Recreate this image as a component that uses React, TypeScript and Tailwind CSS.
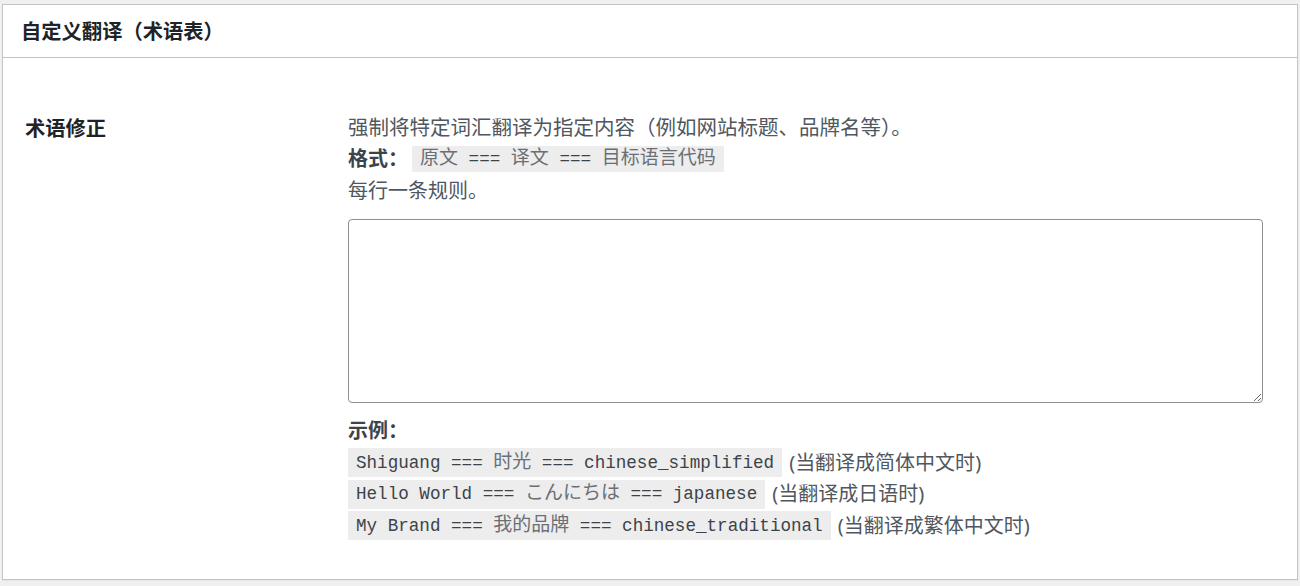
/**
 * GlossarySettings — "custom translation (glossary)" settings box, laid out
 * like a WordPress admin postbox with a single form-table row.
 */

const SANS = { fontFamily: '"Noto Sans", "Noto Sans CJK SC", sans-serif' }
const MONO = { fontFamily: '"Liberation Mono", "Noto Sans CJK SC", monospace' }

interface Example {
  source: string
  target: string
  lang: string
  note: string
}

const EXAMPLES: Example[] = [
  { source: 'Shiguang', target: '时光', lang: 'chinese_simplified', note: '当翻译成简体中文时' },
  { source: 'Hello World', target: 'こんにちは', lang: 'japanese', note: '当翻译成日语时' },
  { source: 'My Brand', target: '我的品牌', lang: 'chinese_traditional', note: '当翻译成繁体中文时' },
]

// CJK inside code runs a little wider/lighter than the mono glyphs
function Cjk({ children }: { children: React.ReactNode }) {
  return <span className="text-[19px] text-[#6b6f75]">{children}</span>
}

function ExampleLine({ ex }: { ex: Example }) {
  return (
    <div className="flex h-[31.5px] items-center">
      <code
        style={MONO}
        className="flex h-[29px] items-center whitespace-pre bg-[#ededed] px-[8px] text-[17.6px] text-[#3c434a]"
      >
        {ex.source} === <Cjk>{ex.target}</Cjk> === {ex.lang}
      </code>
      <span className="ml-[7px] text-[20px] text-[#50575e]">({ex.note})</span>
    </div>
  )
}

export default function App() {
  return (
    <div style={SANS} className="h-[586px] w-[1300px] bg-[#f0f0f1] px-[2px] pt-[4px]">
      <div className="h-[576px] border border-[#c3c4c7] bg-white shadow-[0_1px_1px_rgba(0,0,0,0.04)]">
        <div className="flex h-[53px] items-center border-b border-[#c3c4c7] pl-[18px]">
          <h2 className="text-[20.3px] font-semibold text-[#1d2327]">自定义翻译（术语表）</h2>
        </div>

        <div className="flex pl-[22px] pt-[54px]">
          <div className="w-[323px] shrink-0">
            <div className="flex h-[31.5px] items-center text-[20.3px] font-semibold text-[#1d2327]">
              术语修正
            </div>
          </div>

          <div className="w-[915px] text-[20px] text-[#50575e]">
            <div className="flex h-[31.5px] items-center text-[20.5px]">
              强制将特定词汇翻译为指定内容（例如网站标题、品牌名等）。
            </div>
            <div className="flex h-[31.5px] items-center">
              <strong className="font-semibold text-[#3c434a]">格式：</strong>
              <code
                style={MONO}
                className="ml-[4px] flex h-[26px] items-center whitespace-pre bg-[#ededed] px-[8px] text-[17.6px] text-[#3c434a]"
              >
                <Cjk>原文</Cjk> === <Cjk>译文</Cjk> === <Cjk>目标语言代码</Cjk>
              </code>
            </div>
            <div className="flex h-[31.5px] items-center">每行一条规则。</div>

            <textarea
              aria-label="术语修正"
              spellCheck={false}
              className="mt-[12px] block h-[184px] w-[915px] rounded-[4px] border border-[#8c8f94] bg-white px-[11px] py-[6px] text-[20px] text-[#2c3338] outline-none"
            />

            <div className="mt-[13px] flex h-[31.5px] items-center font-semibold text-[#3c434a]">
              示例：
            </div>
            {EXAMPLES.map((ex) => (
              <ExampleLine key={ex.lang} ex={ex} />
            ))}
          </div>
        </div>
      </div>
    </div>
  )
}
